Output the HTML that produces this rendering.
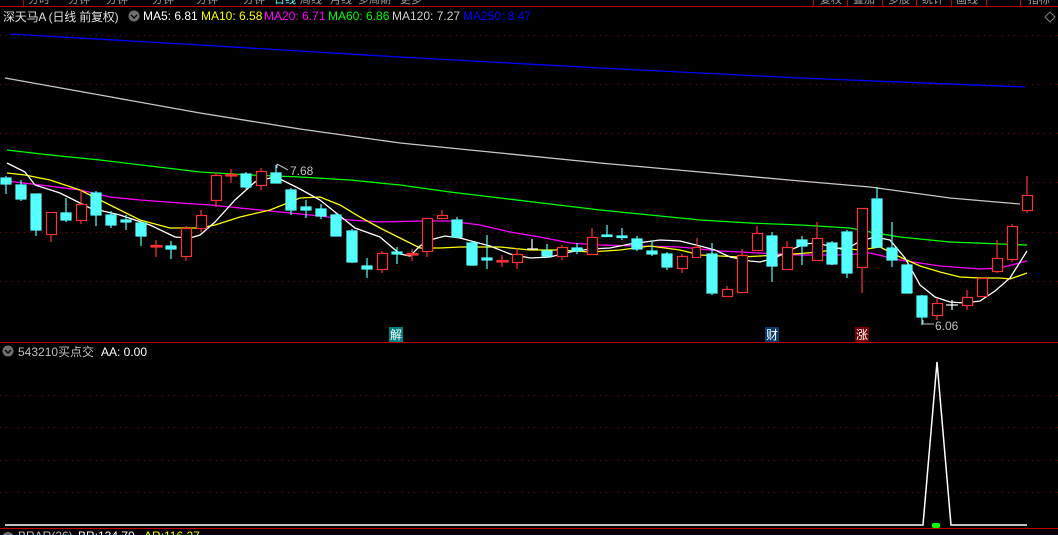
<!DOCTYPE html>
<html><head><meta charset="utf-8"><style>
html,body{margin:0;padding:0;background:#000;width:1058px;height:535px;overflow:hidden}
svg{display:block}
text{font-family:"Liberation Sans","Noto Sans CJK SC",sans-serif}
</style></head><body>
<svg width="1058" height="535" viewBox="0 0 1058 535" xmlns="http://www.w3.org/2000/svg">
<rect width="1058" height="535" fill="#000"/>
<g fill="#a0a0a0" font-size="11">
<text x="28" y="3">分时</text><text x="68" y="3">分钟</text><text x="106" y="3">分钟</text><text x="152" y="3">分钟</text>
<text x="196" y="3">分钟</text><text x="243" y="3">分钟</text><text x="274" y="3" fill="#54ffff">日线</text>
<text x="300" y="3">周线</text><text x="330" y="3">月线</text><text x="358" y="3">多周期</text><text x="400" y="3">更多</text>
<text x="820" y="3">复权</text><text x="853" y="3">叠加</text><text x="888" y="3">多股</text><text x="922" y="3">统计</text><text x="956" y="3">画线</text><text x="1028" y="3">指标</text>
</g>
<line x1="0" y1="6.5" x2="1058" y2="6.5" stroke="#c00000" stroke-width="1"/>
<line x1="23.5" y1="0" x2="23.5" y2="6" stroke="#c00000"/>
<g stroke="#c00000"><line x1="813.5" y1="0" x2="813.5" y2="6"/><line x1="847.5" y1="0" x2="847.5" y2="6"/><line x1="882.5" y1="0" x2="882.5" y2="6"/><line x1="916.5" y1="0" x2="916.5" y2="6"/><line x1="951.5" y1="0" x2="951.5" y2="6"/><line x1="986.5" y1="0" x2="986.5" y2="6"/><line x1="1020.5" y1="0" x2="1020.5" y2="6"/></g>
<text x="3" y="21" font-size="12" fill="#e0e0e0" letter-spacing="-0.2">深天马A (日线 前复权)</text>
<circle cx="134" cy="16" r="5.5" fill="#707070"/><path d="M131 15l3 3 3-3" stroke="#000" stroke-width="1.3" fill="none"/>
<g font-size="12">
<text x="143" y="20" fill="#ffffff">MA5: 6.81</text>
<text x="201" y="20" fill="#ffff00">MA10: 6.58</text>
<text x="264" y="20" fill="#ff00ff">MA20: 6.71</text>
<text x="328" y="20" fill="#00ff00">MA60: 6.86</text>
<text x="392" y="20" fill="#d0d0d0">MA120: 7.27</text>
<text x="463" y="20" fill="#0000ff">MA250: 8.47</text>
</g>
<path d="M1050 12l5 5-5 5-5-5z" stroke="#808080" fill="none"/>
<g stroke="#900000" stroke-dasharray="1 5" stroke-width="1">
<line x1="0" y1="35.5" x2="1058" y2="35.5"/><line x1="0" y1="84.5" x2="1058" y2="84.5"/><line x1="0" y1="133.5" x2="1058" y2="133.5"/>
<line x1="0" y1="182.5" x2="1058" y2="182.5"/><line x1="0" y1="232.5" x2="1058" y2="232.5"/><line x1="0" y1="281.5" x2="1058" y2="281.5"/>
<line x1="0" y1="395.5" x2="1058" y2="395.5"/><line x1="0" y1="427.5" x2="1058" y2="427.5"/><line x1="0" y1="460.5" x2="1058" y2="460.5"/><line x1="0" y1="492.5" x2="1058" y2="492.5"/>
</g>
<g fill="none" stroke-width="1.3">
<polyline stroke="#0000ff" points="10,34 200,45 400,57 600,68 800,78 1025,87"/>
<polyline stroke="#c8c8c8" points="5,78 100,95 200,113 300,129 400,143 500,153 600,163 700,172 800,181 870,187 950,198 1020,204"/>
<polyline stroke="#00ff00" points="7,150 50,155 100,160 150,166 200,172 250,175 300,177 350,180 400,185 450,192 500,198 550,204 600,210 650,215 700,220 750,223 800,225 850,228 870,232 900,237 950,242 1027,245"/>
<polyline stroke="#ff00ff" points="7,181 40,185 80,190 110,197 140,200 180,203 210,205 250,209 290,213 320,216 350,220 380,222 420,221 450,221 480,225 510,232 540,237 570,243 600,245 640,246 680,247 720,251 760,253 800,255 840,255 870,253 900,260 940,266 980,269 1000,268 1027,261"/>
<polyline stroke="#ffff00" points="7,173 25,175 50,180 80,190 110,205 140,220 170,228 200,228 215,225 240,217 270,210 300,198 320,197 340,205 360,217 380,228 400,238 420,248 440,248 460,247 500,247 530,250 560,250 590,252 620,250 650,246 680,250 700,255 740,257 780,255 820,252 840,248 860,250 880,247 900,257 920,266 940,272 960,277 980,278 1000,278 1010,279 1027,273"/>
<polyline stroke="#ffffff" points="7,163 25,172 35,185 60,193 90,208 120,215 150,225 175,237 190,238 200,235 215,222 235,200 255,182 270,178 280,179 300,189 320,200 340,216 355,228 380,237 400,254 410,256 420,246 430,240 445,236 460,238 475,242 490,246 510,254 530,258 550,257 570,252 590,249 610,248 630,244 660,240 680,241 700,246 715,250 730,257 750,261 760,262 775,258 790,250 805,244 815,243 830,246 845,250 860,241 875,237 890,240 905,258 920,285 935,297 950,302 965,303 980,301 995,291 1010,278 1027,251"/>
</g>
<g stroke-width="1.2">
<g stroke="#54ffff" fill="#54ffff">
<line x1="6" y1="176" x2="6" y2="194"/><rect x="1" y="178" width="10" height="6"/>
<line x1="21" y1="180" x2="21" y2="201"/><rect x="16" y="185" width="10" height="14"/>
<line x1="36" y1="194" x2="36" y2="236"/><rect x="31" y="194" width="10" height="36"/>
<line x1="66" y1="198" x2="66" y2="222"/><rect x="61" y="213" width="10" height="7"/>
<line x1="96" y1="191" x2="96" y2="226"/><rect x="91" y="193" width="10" height="22"/>
<line x1="111" y1="211" x2="111" y2="228"/><rect x="106" y="215" width="10" height="10"/>
<line x1="126" y1="215" x2="126" y2="230"/><rect x="121" y="220" width="10" height="2"/>
<line x1="141" y1="222" x2="141" y2="246"/><rect x="136" y="223" width="10" height="13"/>
<line x1="171" y1="241" x2="171" y2="259"/><rect x="166" y="246" width="10" height="3"/>
<line x1="246" y1="172" x2="246" y2="189"/><rect x="241" y="174" width="10" height="13"/>
<line x1="276" y1="165" x2="276" y2="183"/><rect x="271" y="173" width="10" height="10"/>
<line x1="291" y1="188" x2="291" y2="215"/><rect x="286" y="190" width="10" height="20"/>
<line x1="306" y1="200" x2="306" y2="218"/><rect x="301" y="207" width="10" height="3"/>
<line x1="321" y1="204" x2="321" y2="219"/><rect x="316" y="209" width="10" height="7"/>
<line x1="336" y1="213" x2="336" y2="236"/><rect x="331" y="215" width="10" height="21"/>
<line x1="352" y1="229" x2="352" y2="263"/><rect x="347" y="231" width="10" height="31"/>
<line x1="367" y1="258" x2="367" y2="278"/><rect x="362" y="266" width="10" height="3"/>
<line x1="397" y1="247" x2="397" y2="264"/><rect x="392" y="252" width="10" height="2"/>
<line x1="457" y1="217" x2="457" y2="238"/><rect x="452" y="220" width="10" height="17"/>
<line x1="472" y1="241" x2="472" y2="266"/><rect x="467" y="243" width="10" height="22"/>
<line x1="487" y1="235" x2="487" y2="269"/><rect x="482" y="258" width="10" height="2"/>
<line x1="547" y1="244" x2="547" y2="258"/><rect x="542" y="251" width="10" height="5"/>
<line x1="577" y1="243" x2="577" y2="254"/><rect x="572" y="248" width="10" height="3"/>
<line x1="607" y1="225" x2="607" y2="237"/><rect x="602" y="235" width="10" height="1.5"/>
<line x1="622" y1="228" x2="622" y2="240"/><rect x="617" y="236" width="10" height="1.5"/>
<line x1="637" y1="236" x2="637" y2="251"/><rect x="632" y="239" width="10" height="10"/>
<line x1="652" y1="242" x2="652" y2="256"/><rect x="647" y="251" width="10" height="3"/>
<line x1="667" y1="252" x2="667" y2="270"/><rect x="662" y="254" width="10" height="13"/>
<line x1="712" y1="243" x2="712" y2="295"/><rect x="707" y="254" width="10" height="39"/>
<line x1="772" y1="232" x2="772" y2="282"/><rect x="767" y="236" width="10" height="30"/>
<line x1="802" y1="236" x2="802" y2="265"/><rect x="797" y="240" width="10" height="6"/>
<line x1="832" y1="241" x2="832" y2="265"/><rect x="827" y="243" width="10" height="21"/>
<line x1="847" y1="230" x2="847" y2="278"/><rect x="842" y="232" width="10" height="41"/>
<line x1="877" y1="187" x2="877" y2="248"/><rect x="872" y="199" width="10" height="48"/>
<line x1="892" y1="222" x2="892" y2="267"/><rect x="887" y="248" width="10" height="12"/>
<line x1="907" y1="265" x2="907" y2="293"/><rect x="902" y="265" width="10" height="28"/>
<line x1="922" y1="295" x2="922" y2="325"/><rect x="917" y="296" width="10" height="21"/>
</g>
<g stroke="#ff3232" fill="#000">
<line x1="51" y1="212" x2="51" y2="242"/><rect x="46.5" y="212.5" width="10" height="22"/>
<line x1="81" y1="190" x2="81" y2="224"/><rect x="76.5" y="204.5" width="10" height="16"/>
<line x1="156" y1="240" x2="156" y2="257"/><rect x="151" y="245.5" width="11" height="1.5" fill="#ff3232"/>
<line x1="186" y1="226" x2="186" y2="261"/><rect x="181.5" y="228.5" width="10" height="28"/>
<line x1="201" y1="210" x2="201" y2="232"/><rect x="196.5" y="215.5" width="10" height="13"/>
<line x1="216" y1="172" x2="216" y2="207"/><rect x="211.5" y="175.5" width="10" height="25"/>
<line x1="231" y1="169" x2="231" y2="183"/><rect x="226" y="174.5" width="11" height="1.5" fill="#ff3232"/>
<line x1="261" y1="168" x2="261" y2="190"/><rect x="256.5" y="171.5" width="10" height="14"/>
<line x1="382" y1="251" x2="382" y2="273"/><rect x="377.5" y="253.5" width="10" height="16"/>
<line x1="412" y1="249" x2="412" y2="261"/><rect x="407" y="253.5" width="11" height="1.5" fill="#ff3232"/>
<line x1="427" y1="218" x2="427" y2="257"/><rect x="422.5" y="218.5" width="10" height="33"/>
<line x1="442" y1="210" x2="442" y2="219"/><rect x="437.5" y="215.5" width="10" height="3"/>
<line x1="502" y1="255" x2="502" y2="267"/><rect x="497" y="260.5" width="11" height="1.5" fill="#ff3232"/>
<line x1="517" y1="248" x2="517" y2="269"/><rect x="512.5" y="254.5" width="10" height="8"/>
<line x1="562" y1="245" x2="562" y2="260"/><rect x="557.5" y="247.5" width="10" height="9"/>
<line x1="592" y1="228" x2="592" y2="255"/><rect x="587.5" y="237.5" width="10" height="17"/>
<line x1="682" y1="254" x2="682" y2="273"/><rect x="677.5" y="256.5" width="10" height="12"/>
<line x1="697" y1="238" x2="697" y2="257"/><rect x="692.5" y="247.5" width="8" height="10"/>
<line x1="727" y1="286" x2="727" y2="296"/><rect x="722.5" y="289.5" width="10" height="7"/>
<line x1="742" y1="249" x2="742" y2="292"/><rect x="737.5" y="255.5" width="10" height="37"/>
<line x1="757" y1="226" x2="757" y2="250"/><rect x="752.5" y="233.5" width="10" height="17"/>
<line x1="787" y1="241" x2="787" y2="270"/><rect x="782.5" y="247.5" width="10" height="22"/>
<line x1="817" y1="222" x2="817" y2="261"/><rect x="812.5" y="238.5" width="10" height="22"/>
<line x1="862" y1="208" x2="862" y2="293"/><rect x="857.5" y="208.5" width="10" height="59"/>
<line x1="937" y1="298" x2="937" y2="320"/><rect x="932.5" y="303.5" width="10" height="12"/>
<line x1="967" y1="290" x2="967" y2="310"/><rect x="962.5" y="297.5" width="10" height="8"/>
<line x1="982" y1="278" x2="982" y2="297"/><rect x="977.5" y="278.5" width="10" height="18"/>
<line x1="997" y1="240" x2="997" y2="273"/><rect x="992.5" y="258.5" width="10" height="13"/>
<line x1="1012" y1="224" x2="1012" y2="262"/><rect x="1007.5" y="226.5" width="10" height="33"/>
<line x1="1027" y1="176" x2="1027" y2="213"/><rect x="1022.5" y="195.5" width="10" height="15"/>
</g>
<g stroke="#ffffff">
<line x1="532" y1="239" x2="532" y2="250"/><line x1="527" y1="249" x2="538" y2="249"/>
<line x1="952" y1="300" x2="952" y2="310"/><line x1="946" y1="305" x2="958" y2="305"/>
</g>
</g>
<path d="M277 164l11 6M277 164v4" stroke="#c0c0c0" fill="none"/>
<text x="290" y="175" font-size="12" fill="#c0c0c0">7.68</text>
<path d="M923 320v4h11" stroke="#c0c0c0" fill="none"/>
<text x="935" y="330" font-size="12" fill="#c0c0c0">6.06</text>
<rect x="389" y="327" width="14" height="15" fill="#008080"/><text x="390" y="339" font-size="12" fill="#fff">解</text>
<rect x="765" y="327" width="14" height="15" fill="#0a3a6a"/><text x="766" y="339" font-size="12" fill="#fff">财</text>
<rect x="855" y="327" width="14" height="15" fill="#700000"/><text x="856" y="339" font-size="12" fill="#fff">涨</text>
<line x1="0" y1="342.5" x2="1058" y2="342.5" stroke="#c00000"/>
<circle cx="8" cy="351" r="5.5" fill="#707070"/><path d="M5 350l3 3 3-3" stroke="#000" stroke-width="1.3" fill="none"/>
<text x="18" y="356" font-size="12" fill="#c0c0c0">543210买点交</text>
<text x="101" y="356" font-size="12" fill="#ffffff">AA: 0.00</text>
<polyline points="5,525 923,525 937,362 951,525 1027,525" stroke="#ffffff" stroke-width="1.5" fill="none"/>
<rect x="932" y="523" width="8" height="5" rx="2" fill="#00ff00"/>
<line x1="0" y1="528.5" x2="1058" y2="528.5" stroke="#c00000"/>
<circle cx="8" cy="538" r="6" fill="#707070"/>
<text x="18" y="540" font-size="12" fill="#c0c0c0">BRAR(26)</text>
<text x="78" y="540" font-size="12" fill="#ffffff">BR:134.70</text>
<text x="144" y="540" font-size="12" fill="#ffff00">AR:116.27</text>
</svg>
</body></html>
